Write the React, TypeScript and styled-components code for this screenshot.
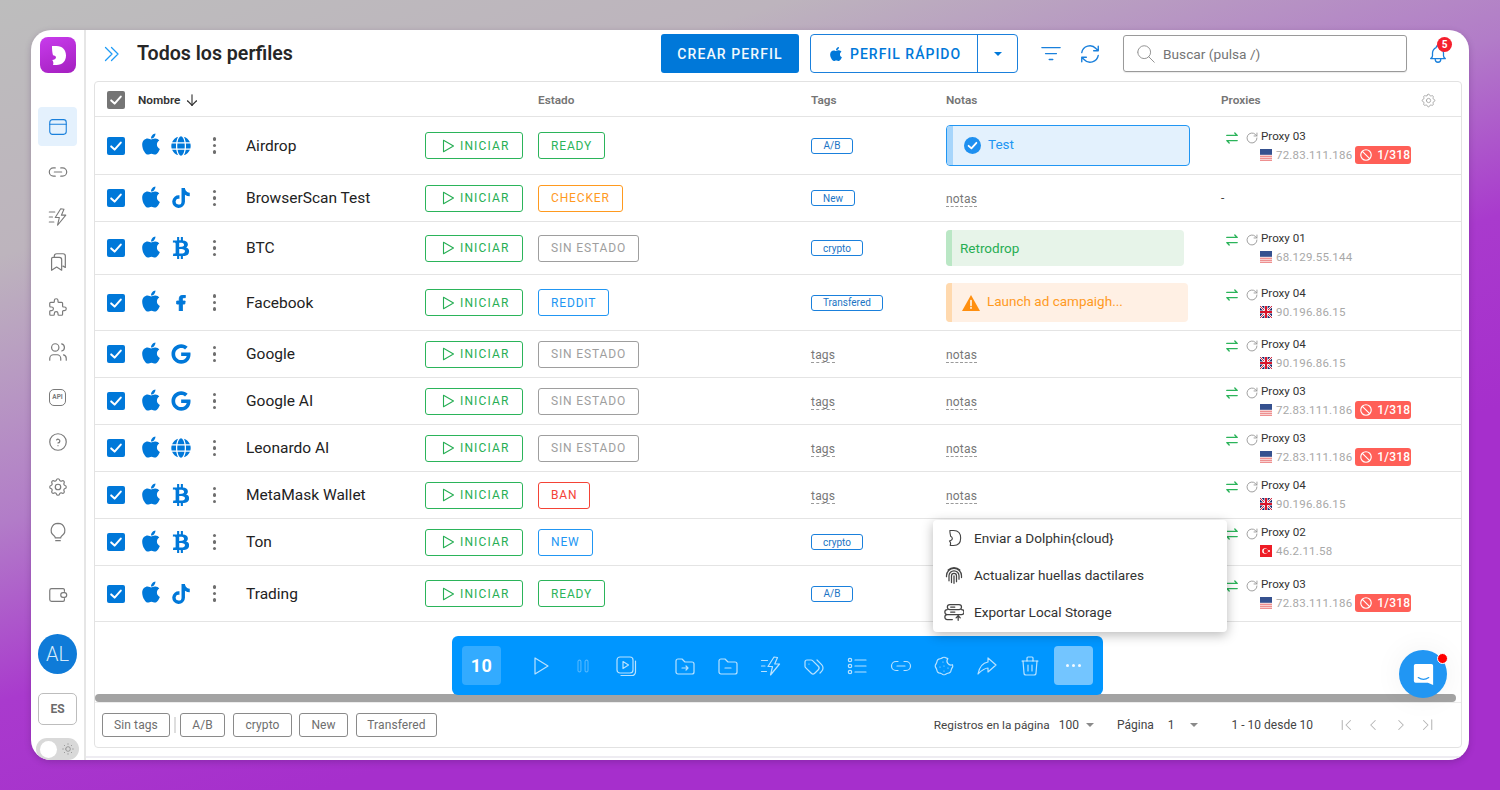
import React from 'react';
import styled, { createGlobalStyle } from 'styled-components';
import { FaApple, FaGlobe, FaTiktok, FaBtc, FaFacebookF, FaGoogle } from 'react-icons/fa';
import {
  TbPuzzle, TbUsers, TbHelpCircle, TbSettings, TbPlayerPlay,
  TbTags, TbCookie, TbShare3, TbTrash, TbBan, TbSearch, TbBell,
  TbArrowDown, TbChevronLeft, TbChevronRight,
  TbChevronLeftPipe, TbChevronRightPipe, TbSun,
} from 'react-icons/tb';

const Global = createGlobalStyle`
  html, body { margin: 0; padding: 0; height: 790px; overflow: hidden; }
  body { font-family: Roboto, "Liberation Sans", sans-serif; }
  * { box-sizing: border-box; }
`;

const Page = styled.div`
  width: 1500px; height: 790px; padding: 30px 31px;
  background: linear-gradient(162deg, #bdbdbd 0%, #bdb4bd 20%, #b27cc8 41%, #a93acd 55%, #a62fcc 70%, #a62fcc 100%);
`;
const Win = styled.div`
  position: relative; width: 1438px; height: 730px; display: flex; background: #fff;
  border-radius: 20px; overflow: hidden; box-shadow: 0 2px 6px rgba(60, 20, 80, .25);
`;
const Side = styled.aside`
  width: 55px; flex: none; border-right: 2px solid #e6e6e6; display: flex; flex-direction: column; align-items: center;
`;
const LogoBox = styled.div`
  width: 36px; height: 36px; margin-top: 7px; flex: none; border-radius: 8px;
  background: linear-gradient(160deg, #c83cec, #a41fbf);
  svg { display: block; }
`;
const Nav = styled.nav`margin-top: 31.5px; display: flex; flex-direction: column; align-items: center;`;
const NavSlot = styled.div<{ $active?: boolean; $mt?: number }>`
  width: 39px; height: 45px; flex: none; display: flex; align-items: center; justify-content: center;
  position: relative; margin-top: ${p => p.$mt ?? 0}px;
  color: ${p => (p.$active ? '#1a80dc' : '#7a7a7a')};
  ${p => p.$active && `
    &::before { content: ''; position: absolute; left: 0; top: 2.5px; width: 39px; height: 39px; background: #e4f1fd; border-radius: 4px; }
    svg { position: relative; }
  `}
`;
const ApiBox = styled.div`
  width: 17px; height: 17px; border: 1.3px solid #7a7a7a; border-radius: 5px; font-size: 6.5px; font-weight: 700;
  display: flex; align-items: center; justify-content: center; color: #7a7a7a; letter-spacing: 0;
`;
const Avatar = styled.div`
  width: 39px; height: 40px; margin-top: 16.5px; border-radius: 50%; background: #0f7bd8; color: #d6ebfb; flex: none;
  display: flex; align-items: center; justify-content: center; font-size: 20px; font-weight: 300;
`;
const Lang = styled.div`
  width: 39px; height: 32px; margin-top: 19px; border: 1px solid #bdbdbd; border-radius: 5px; color: #6b6b6b; flex: none;
  display: flex; align-items: center; justify-content: center; font-size: 12px; font-weight: 700;
`;
const Toggle = styled.div`
  width: 43px; height: 22px; margin-top: 13px; border-radius: 11px; background: #d9d9d9; flex: none; padding: 3px 4px;
  display: flex; align-items: center; justify-content: space-between; color: #8a8a8a;
`;
const Knob = styled.span`width: 17px; height: 17px; border-radius: 50%; background: #fff; display: block; flex: none;`;

const Main = styled.main`
  flex: 1; min-width: 0; padding: 0 7px 8px 8px; display: flex; flex-direction: column; height: 728px;
  border-bottom: 2px solid #eeecf2;
`;
const Head = styled.header`
  height: 51px; flex: none; padding: 0 15px 4px 10px; display: flex; align-items: center;
`;
const Chevrons = styled.svg`width: 16px; height: 16px; flex: none; display: block;`;
const Title = styled.h1`margin: 0 0 0 17px; font-size: 19.6px; font-weight: 600; color: #262626; white-space: nowrap;`;
const Create = styled.button`
  margin-left: auto; width: 138px; height: 39px; border: 0; border-radius: 3px; background: #0078d9; color: #f2f8fd;
  font: 500 14px Roboto, sans-serif; letter-spacing: 1.1px; padding: 0;
`;
const Split = styled.div`
  margin-left: 11px; width: 208px; height: 39px; border: 1px solid #1a80dc; border-radius: 4px; display: flex; color: #0078d9;
`;
const SplitMain = styled.div`
  width: 167px; border-right: 1px solid #1a80dc; display: flex; align-items: center; padding-left: 17px; gap: 6px;
  font-size: 14px; font-weight: 500; letter-spacing: 1px; white-space: nowrap;
`;
const SplitCaret = styled.div`flex: 1; display: flex; align-items: center; justify-content: center;`;
const CaretDown = styled.span<{ $c?: string; $w?: number }>`
  display: block; width: 0; height: 0; border-left: ${p => p.$w ?? 4.5}px solid transparent; border-right: ${p => p.$w ?? 4.5}px solid transparent;
  border-top: ${p => p.$w ?? 4.5}px solid ${p => p.$c ?? '#0078d9'};
`;
const ToolIcon = styled.div<{ $ml: number; $w: number }>`
  margin-left: ${p => p.$ml}px; width: ${p => p.$w}px; display: flex; justify-content: center; color: #1a80dc; flex: none;
`;
const SearchBox = styled.div`
  margin-left: 24px; width: 284px; height: 37px; border: 1px solid #9a9a9a; border-radius: 3px; display: flex; align-items: center; flex: none;
  padding-left: 11px; gap: 6px; color: #757575; font-size: 13.7px; box-shadow: 0 1px 1px rgba(0,0,0,.08);
`;
const BellWrap = styled.div`margin-left: 20px; width: 20px; height: 24px; position: relative; color: #1a80dc; flex: none; margin-top: 2px;`;
const Badge = styled.span`
  position: absolute; left: 10px; top: -5.5px; width: 15px; height: 15px; border-radius: 50%; background: #f5202e; color: #fff;
  font-size: 10px; font-weight: 700; display: flex; align-items: center; justify-content: center;
`;

const Card = styled.section`
  flex: 1; min-height: 0; border: 1px solid #e2e2e2; border-radius: 4px; display: flex; flex-direction: column;
`;
const HeadRow = styled.div`
  height: 35px; flex: none; display: grid; grid-template-columns: 43px 400px 273px 135px 275px 1fr; align-items: center; border-bottom: 1px solid #e4e4e4;
  padding-top: 2px; font-size: 11.8px; font-weight: 600; color: #757575;
`;
const HeadCheck = styled.div`padding-left: 12px; margin-right: -20px;`;
const HeadName = styled.div`display: flex; align-items: center; gap: 3px; color: #333; font-weight: 600;`;
const HeadLast = styled.div`display: flex; justify-content: space-between; align-items: center; padding-right: 24px; color: #757575;`;
const Row = styled.div<{ $h: number }>`
  height: ${p => p.$h}px; flex: none; display: grid; grid-template-columns: 47px 62px 42px 179px 113px 273px 135px 275px 1fr;
  align-items: center; border-bottom: 1px solid #e4e4e4;
`;
const CheckCell = styled.div`padding-left: 12px; display: flex;`;
const Cell = styled.div`display: flex; align-items: center; min-width: 0;`;
const Box = styled.span<{ $gray?: boolean }>`
  width: 18px; height: 18px; border-radius: 2px; background: ${p => (p.$gray ? '#757575' : '#0078d9')}; display: flex; align-items: center; justify-content: center; flex: none;
`;
const OsCell = styled.div`display: flex; align-items: center; color: #0078d9;`;
const OsSlot = styled.span`width: 29px; display: flex; margin-top: -3px; margin-left: -3px; margin-right: 3px;`;
const SiteSlot = styled.span`width: 20px; height: 22px; display: flex; justify-content: center; align-items: center;`;
const Dots = styled.div`
  display: flex; flex-direction: column; gap: 3px; padding-left: 8.5px;
  i { display: block; width: 3.5px; height: 3.5px; border-radius: 50%; background: #6e6e6e; }
`;
const Name = styled.div`font-size: 15.5px; color: #222; white-space: nowrap;`;
const Start = styled.button`
  width: 97.5px; height: 27px; border: 1px solid #2bb45a; border-radius: 3px; background: #fff; color: #27ae54; padding: 0 0 0 15px;
  display: flex; align-items: center; gap: 5px; font: 400 12px Roboto, sans-serif; letter-spacing: 1.15px;
`;
const Status = styled.span<{ $c: string }>`
  display: inline-flex; height: 27px; align-items: center; padding: 0 12px; border: 1px solid ${p => p.$c}; color: ${p => p.$c}; border-radius: 3px;
  font-size: 12px; letter-spacing: .85px; font-weight: 400; white-space: nowrap;
`;
const Tag = styled.span`
  display: inline-flex; height: 16px; padding: 0 11px; align-items: center; justify-content: center; min-width: 42px; border: 1px solid #1a80dc; border-radius: 3px;
  color: #1a74c4; font-size: 10px; white-space: nowrap;
`;
const Dashed = styled.span`
  font-size: 12px; color: #777; border-bottom: 1px dashed #9a9a9a; line-height: 13px; letter-spacing: .2px; margin-top: 3px;
`;
const Note = styled.div<{ $bg: string; $bar: string; $c: string; $w: number; $h: number; $border?: boolean; $pl: number }>`
  width: ${p => p.$w}px; height: ${p => p.$h}px; background: ${p => p.$bg}; border-radius: 4px; color: ${p => p.$c}; font-size: 13.5px;
  display: flex; align-items: center; gap: 7px; padding-left: ${p => p.$pl}px; position: relative; overflow: hidden;
  ${p => p.$border && `border: 1px solid #2196f3;`}
  &::before { content: ''; position: absolute; left: 0; top: 0; bottom: 0; width: 6px; background: ${p => p.$bar}; }
`;
const NoteText = styled.span`margin-top: -4px;`;
const Px = styled.div`display: flex; padding: 1px 0 0 5px; align-items: flex-start;`;
const PxIcons = styled.div`display: flex; align-items: center; gap: 7px; width: 35px; flex: none; height: 15px; margin-top: 1.5px; color: #9a9a9a;`;
const PxLines = styled.div`display: flex; flex-direction: column; gap: 2px;`;
const PxName = styled.div`font-size: 11.6px; line-height: 15px; height: 15px; color: #333;`;
const PxAddr = styled.div`display: flex; align-items: center; height: 18px; font-size: 11.5px; color: #a8a8a8; letter-spacing: .2px; gap: 4px; white-space: nowrap; margin-left: -1px;`;
const PxNone = styled.div`font-size: 12px; color: #444;`;
const FlagSvg = styled.svg`width: 12px; height: 12px; flex: none; display: block;`;
const Blocked = styled.span`
  display: inline-flex; align-items: center; gap: 4px; height: 18px; width: 56px; padding-left: 4px; margin-left: -1px; border-radius: 3px; background: #ff5f57; color: #fff;
  font-size: 12px; font-weight: 500; letter-spacing: .2px;
`;
const Spacer = styled.div`height: 72px; flex: none;`;
const Scroll = styled.div`height: 8px; flex: none; width: 1361px; border-radius: 4px; background: #a3a3a3;`;
const Foot = styled.footer`
  flex: 1; min-height: 0; border-top: 1px solid #ececec; display: flex; align-items: center; padding: 0 24px 0 7px;
`;
const FilterTag = styled.span<{ $w: number; $ml: number }>`
  width: ${p => p.$w}px; margin-left: ${p => p.$ml}px; height: 24px; display: flex; align-items: center; justify-content: center; flex: none;
  border: 1px solid #8a8a8a; border-radius: 3px; color: #6e6e6e; font-size: 12px; letter-spacing: .1px;
`;
const Sep = styled.span`width: 2px; height: 16px; margin-left: 4px; background: #dedede; flex: none;`;
const Pager = styled.div`
  margin-left: auto; display: flex; align-items: center; font-size: 12px; color: #444; white-space: nowrap;
`;
const PagerText = styled.span<{ $ml?: number; $fs?: number }>`
  margin-left: ${p => p.$ml ?? 0}px; ${p => p.$fs && `font-size: ${p.$fs}px;`}
`;
const PagerCaret = styled.span<{ $ml: number }>`margin-left: ${p => p.$ml}px; display: block;`;
const PagerIcons = styled.div`margin-left: 23.5px; display: flex; gap: 9.5px; color: #b5b5b5;`;

const Bar = styled.div`
  position: absolute; left: 421px; top: 606px; width: 651px; height: 59px; border-radius: 6px; background: #0096ff; padding: 10px; display: flex; align-items: center;
  color: rgba(255,255,255,.72);
`;
const Count = styled.div`
  width: 39px; height: 39px; background: rgba(255,255,255,.2); border-radius: 4px; color: #fff; font-size: 18px; font-weight: 700; letter-spacing: .5px;
  display: flex; align-items: center; justify-content: center; flex: none;
`;
const BarSlot = styled.div<{ $ml?: number; $dim?: boolean }>`
  width: 43.2px; margin-left: ${p => p.$ml ?? 0}px; display: flex; justify-content: center; flex: none; opacity: ${p => (p.$dim ? .45 : 1)};
`;
const More = styled.div`
  margin-left: auto; width: 39px; height: 39px; background: rgba(255,255,255,.45); border-radius: 4px; display: flex; align-items: center; justify-content: center; gap: 2.5px;
  i { display: block; width: 3.5px; height: 3.5px; background: rgba(255,255,255,.9); border-radius: 50%; }
`;
const Menu = styled.div`
  position: absolute; left: 902px; top: 490px; width: 294px; height: 112px; border-radius: 4px; background: #fff; padding-bottom: 2px;
  display: flex; flex-direction: column; justify-content: center;
  box-shadow: 0 3px 12px rgba(0,0,0,.28);
`;
const MenuItem = styled.div`
  height: 37px; flex: none; display: flex; align-items: center; padding-left: 11px; gap: 10px; font-size: 13.6px; color: #333; white-space: nowrap;
  svg { color: #444; }
`;
const Chat = styled.div`
  position: absolute; left: 1368px; top: 620px; width: 48px; height: 48px; border-radius: 50%; background: #2196f3;
  box-shadow: 0 0 30px rgba(0,0,0,.06); display: flex; align-items: center; justify-content: center;
`;
const ChatDot = styled.span`
  position: absolute; right: -1px; top: 3px; width: 11px; height: 11px; border-radius: 50%; background: #f00; border: 1.5px solid #fff;
`;

const Glyph = styled.svg.attrs({ viewBox: '0 0 24 24', fill: 'none', stroke: 'currentColor', strokeLinecap: 'round', strokeLinejoin: 'round' })<{ $s: number; $t?: number }>`
  width: ${p => p.$s}px; height: ${p => p.$s}px; stroke-width: ${p => p.$t ?? 1.3}; flex: none; display: block;
`;

const tick = (
  <svg width="14" height="14" viewBox="0 0 14 14" fill="none" stroke="#fff" strokeWidth="2" strokeLinecap="round" strokeLinejoin="round">
    <path d="M2.2 7.4 5.6 10.6 11.8 3.6" />
  </svg>
);

const US = () => (
  <FlagSvg viewBox="0 0 12 12">
    <rect width="12" height="12" fill="#fbe3e3" />
    {[6.8, 8.8, 10.8].map(y => <rect key={y} y={y} width="12" height="1.2" fill="#ee9090" />)}
    <rect width="12" height="5.8" fill="#35518f" />
  </FlagSvg>
);
const GB = () => (
  <FlagSvg viewBox="0 0 12 12">
    <rect width="12" height="12" fill="#1a2a6c" />
    <path d="M0 0 12 12M12 0 0 12" stroke="#fff" strokeWidth="2.2" />
    <path d="M0 0 12 12M12 0 0 12" stroke="#d8142b" strokeWidth=".9" />
    <path d="M6 0v12M0 6h12" stroke="#fff" strokeWidth="3.2" />
    <path d="M6 0v12M0 6h12" stroke="#d8142b" strokeWidth="2" />
  </FlagSvg>
);
const TR = () => (
  <FlagSvg viewBox="0 0 12 12">
    <rect width="12" height="12" fill="#ee1c25" />
    <circle cx="5" cy="6" r="2.8" fill="#fff" />
    <circle cx="5.8" cy="6" r="2.2" fill="#ee1c25" />
    <circle cx="9" cy="6" r="1" fill="#fff" />
  </FlagSvg>
);
const Swap = () => (
  <svg width="12" height="12" viewBox="0 0 12 12" fill="none" stroke="#2bb45a" strokeWidth="1.4" strokeLinecap="round" strokeLinejoin="round" style={{ flex: 'none' }}>
    <path d="M.8 3.4h10.4L8.8 1M11.2 8.6H.8l2.400 2.400" />
  </svg>
);
const Reload = () => (
  <Glyph $s={14} $t={1.6}><path d="M20.5 12a8.500 8.500 0 1 1-2.700-6.200L20.5 8.500M20.5 3.500v5h-5" /></Glyph>
);

type Site = 'globe' | 'tiktok' | 'btc' | 'fb' | 'google';
const siteIcon = (s: Site) => {
  if (s === 'globe') return <FaGlobe size={20} />;
  if (s === 'tiktok') return <FaTiktok size={20} />;
  if (s === 'btc') return <FaBtc size={22} />;
  if (s === 'fb') return <FaFacebookF size={16} stroke="currentColor" strokeWidth={30} />;
  return <FaGoogle size={20} />;
};
const C = { green: '#2bb45a', orange: '#ff9a1f', gray: '#9e9e9e', blue: '#2196f3', red: '#f44336' };

type NoteKind = 'test' | 'retro' | 'launch' | undefined;
type RowData = {
  h: number; name: string; site: Site; st: string; sc: string; tag?: string; note?: NoteKind; noNote?: boolean;
  px?: string; ip?: string; flag?: 'us' | 'gb' | 'tr'; blocked?: boolean;
};
const rows: RowData[] = [
  { h: 58, name: 'Airdrop', site: 'globe', st: 'READY', sc: C.green, tag: 'A/B', note: 'test', px: 'Proxy 03', ip: '72.83.111.186', flag: 'us', blocked: true },
  { h: 47, name: 'BrowserScan Test', site: 'tiktok', st: 'CHECKER', sc: C.orange, tag: 'New' },
  { h: 53, name: 'BTC', site: 'btc', st: 'SIN ESTADO', sc: C.gray, tag: 'crypto', note: 'retro', px: 'Proxy 01', ip: '68.129.55.144', flag: 'us' },
  { h: 56, name: 'Facebook', site: 'fb', st: 'REDDIT', sc: C.blue, tag: 'Transfered', note: 'launch', px: 'Proxy 04', ip: '90.196.86.15', flag: 'gb' },
  { h: 47, name: 'Google', site: 'google', st: 'SIN ESTADO', sc: C.gray, px: 'Proxy 04', ip: '90.196.86.15', flag: 'gb' },
  { h: 47, name: 'Google AI', site: 'google', st: 'SIN ESTADO', sc: C.gray, px: 'Proxy 03', ip: '72.83.111.186', flag: 'us', blocked: true },
  { h: 47, name: 'Leonardo AI', site: 'globe', st: 'SIN ESTADO', sc: C.gray, px: 'Proxy 03', ip: '72.83.111.186', flag: 'us', blocked: true },
  { h: 47, name: 'MetaMask Wallet', site: 'btc', st: 'BAN', sc: C.red, px: 'Proxy 04', ip: '90.196.86.15', flag: 'gb' },
  { h: 47, name: 'Ton', site: 'btc', st: 'NEW', sc: C.blue, tag: 'crypto', noNote: true, px: 'Proxy 02', ip: '46.2.11.58', flag: 'tr' },
  { h: 56, name: 'Trading', site: 'tiktok', st: 'READY', sc: C.green, tag: 'A/B', noNote: true, px: 'Proxy 03', ip: '72.83.111.186', flag: 'us', blocked: true },
];

const noteView = (r: RowData) => {
  if (r.note === 'test') return (
    <Note $bg="#e3f1fd" $bar="#a6d5fb" $c="#2196f3" $w={244} $h={41} $border $pl={17}>
      <svg width="17" height="17" viewBox="0 0 17 17"><circle cx="8.5" cy="8.5" r="8.5" fill="#1e90f0" /><path d="M4.6 8.8 7.4 11.4 12.4 5.8" fill="none" stroke="#fff" strokeWidth="1.8" strokeLinecap="round" strokeLinejoin="round" /></svg>
      <NoteText>Test</NoteText>
    </Note>
  );
  if (r.note === 'retro') return <Note $bg="#e7f4e9" $bar="#bae7c5" $c="#27ae54" $w={238} $h={36} $pl={14}>Retrodrop</Note>;
  if (r.note === 'launch') return (
    <Note $bg="#fff0e4" $bar="#ffd9ae" $c="#ff9a1f" $w={242} $h={39} $pl={16}>
      <svg width="18" height="16" viewBox="0 0 18 16"><path d="M9 0 18 16H0z" fill="#ff8f0f" /><path d="M9 5.5v5M9 12.6v.6" stroke="#fff" strokeWidth="1.5" strokeLinecap="round" /></svg>
      <NoteText>Launch ad campaigh...</NoteText>
    </Note>
  );
  if (r.noNote) return null;
  return <Dashed>notas</Dashed>;
};

const boltPath = 'M15 3 9 12.5h4.500L11.500 21l9-11h-4.800L18.500 3.500 15 3zM2.500 6.500h6M2.500 12h3.500M2.500 17.500h5';
const linkPath = 'M9 7.500H7a4.500 4.500 0 0 0 0 9h2M15 7.500h2a4.500 4.500 0 0 1 0 9h-2M8 12h8';

export default function App() {
  return (
    <Page>
      <Global />
      <Win>
        <Side>
          <LogoBox>
            <svg width="36" height="36" viewBox="0 0 36 36">
              <path d="M12 9h4.500c6 0 9.500 4 9.500 9.500S22.500 28 16.500 28H13c.8-1.800.3-3.600-.8-5 2-.2 3.600-.8 3.800-2.500.1-1.300-1.500-2-3-2.200-.8-3-1-6-1-9.300z" fill="#fff" />
            </svg>
          </LogoBox>
          <Nav>
            <NavSlot $active><Glyph $s={22} $t={1.2}><rect x="3" y="4" width="18" height="16" rx="3" /><path d="M3 9h18" /></Glyph></NavSlot>
            <NavSlot><Glyph $s={22}><path d={linkPath} /></Glyph></NavSlot>
            <NavSlot><Glyph $s={22} $t={1.2}><path d={boltPath} /></Glyph></NavSlot>
            <NavSlot><Glyph $s={22}><path d="M8 7V5.500A2.500 2.500 0 0 1 10.500 3h7A2.500 2.500 0 0 1 20 5.500V18l-2.500-1.500M6.500 7h7A2.500 2.500 0 0 1 16 9.500V21l-5.500-3.500L5 21V8.500A1.500 1.500 0 0 1 6.500 7z" /></Glyph></NavSlot>
            <NavSlot><TbPuzzle size={22} strokeWidth={1.3} /></NavSlot>
            <NavSlot><TbUsers size={22} strokeWidth={1.3} /></NavSlot>
            <NavSlot><ApiBox>API</ApiBox></NavSlot>
            <NavSlot><TbHelpCircle size={22} strokeWidth={1.3} /></NavSlot>
            <NavSlot><TbSettings size={22} strokeWidth={1.3} /></NavSlot>
            <NavSlot><Glyph $s={22}><path d="M12 2.500a7.500 7.500 0 0 0-4.300 13.600c.7.500 1.300 1.300 1.300 2.200v.2h6v-.2c0-.9.6-1.700 1.300-2.200A7.500 7.500 0 0 0 12 2.500zM9.500 21.500h5" /></Glyph></NavSlot>
          </Nav>
          <NavSlot $mt={18}><Glyph $s={22}><path d="M19 8V6.500A1.500 1.500 0 0 0 17.500 5H5a2 2 0 0 0-2 2v10a2 2 0 0 0 2 2h12.500a1.500 1.500 0 0 0 1.500-1.500V16" /><rect x="15" y="9.500" width="6.500" height="5" rx="2.500" /></Glyph></NavSlot>
          <Avatar>AL</Avatar>
          <Lang>ES</Lang>
          <Toggle><Knob /><TbSun size={14} strokeWidth={1.4} /></Toggle>
        </Side>
        <Main>
          <Head>
            <Chevrons viewBox="0 0 16 16" fill="none" stroke="#1e9bf5" strokeWidth="1.3" strokeLinecap="round" strokeLinejoin="round">
              <path d="M1.500 1.500 8 8l-6.500 6.500M7.500 1.500 14 8l-6.500 6.500" />
            </Chevrons>
            <Title>Todos los perfiles</Title>
            <Create>CREAR PERFIL</Create>
            <Split>
              <SplitMain><FaApple size={16} />PERFIL RÁPIDO</SplitMain>
              <SplitCaret><CaretDown /></SplitCaret>
            </Split>
            <ToolIcon $ml={23} $w={20}><Glyph $s={22} $t={1.4}><path d="M2 5h20M6 11.500h12M10 18h4" /></Glyph></ToolIcon>
            <ToolIcon $ml={20} $w={18}><Glyph $s={22} $t={1.5}><path d="M3 10.500a9 9 0 0 1 15.500-4.500L21 8.500M21 3.500v5h-5M21 13.500a9 9 0 0 1-15.500 4.500L3 15.500M3 20.500v-5h5" /></Glyph></ToolIcon>
            <SearchBox><TbSearch size={22} strokeWidth={1} color="#8a8a8a" />Buscar (pulsa /)</SearchBox>
            <BellWrap><TbBell size={22} strokeWidth={1.4} /><Badge>5</Badge></BellWrap>
          </Head>
          <Card>
            <HeadRow>
              <HeadCheck><Box $gray>{tick}</Box></HeadCheck>
              <HeadName>Nombre <TbArrowDown size={18} strokeWidth={1.5} /></HeadName>
              <div>Estado</div>
              <div>Tags</div>
              <div>Notas</div>
              <HeadLast>Proxies <TbSettings size={17} strokeWidth={1.1} color="#9a9a9a" /></HeadLast>
            </HeadRow>
            {rows.map(r => (
              <Row key={r.name} $h={r.h}>
                <CheckCell><Box>{tick}</Box></CheckCell>
                <OsCell>
                  <OsSlot><FaApple size={24} /></OsSlot>
                  <SiteSlot>{siteIcon(r.site)}</SiteSlot>
                </OsCell>
                <Dots><i /><i /><i /></Dots>
                <Name>{r.name}</Name>
                <Cell>
                  <Start>
                    <svg width="14" height="14" viewBox="0 0 14 14" fill="none" stroke="currentColor" strokeWidth="1.1" strokeLinejoin="round"><path d="M2.500 1.300 12.500 7l-10 5.700z" /></svg>
                    INICIAR
                  </Start>
                </Cell>
                <Cell><Status $c={r.sc}>{r.st}</Status></Cell>
                <Cell>{r.tag ? <Tag>{r.tag}</Tag> : <Dashed>tags</Dashed>}</Cell>
                <Cell>{noteView(r)}</Cell>
                {r.px ? (
                  <Px>
                    <PxIcons><Swap /><Reload /></PxIcons>
                    <PxLines>
                      <PxName>{r.px}</PxName>
                      <PxAddr>
                        {r.flag === 'us' ? <US /> : r.flag === 'gb' ? <GB /> : <TR />}
                        {r.ip}
                        {r.blocked && <Blocked><TbBan size={14} strokeWidth={2} />1/318</Blocked>}
                      </PxAddr>
                    </PxLines>
                  </Px>
                ) : <PxNone>-</PxNone>}
              </Row>
            ))}
            <Spacer />
            <Scroll />
            <Foot>
              <FilterTag $w={68} $ml={0}>Sin tags</FilterTag>
              <Sep />
              <FilterTag $w={45} $ml={4}>A/B</FilterTag>
              <FilterTag $w={59} $ml={8}>crypto</FilterTag>
              <FilterTag $w={49} $ml={7}>New</FilterTag>
              <FilterTag $w={81} $ml={8}>Transfered</FilterTag>
              <Pager>
                <PagerText $fs={11.8}>Registros en la página</PagerText>
                <PagerText $ml={9}>100</PagerText>
                <PagerCaret $ml={7}><CaretDown $c="#8a8a8a" $w={4} /></PagerCaret>
                <PagerText $ml={23}>Página</PagerText>
                <PagerText $ml={14}>1</PagerText>
                <PagerCaret $ml={15}><CaretDown $c="#8a8a8a" $w={4} /></PagerCaret>
                <PagerText $ml={34}>1 - 10 desde 10</PagerText>
                <PagerIcons>
                  <TbChevronLeftPipe size={18} strokeWidth={1.4} />
                  <TbChevronLeft size={18} strokeWidth={1.4} />
                  <TbChevronRight size={18} strokeWidth={1.4} />
                  <TbChevronRightPipe size={18} strokeWidth={1.4} />
                </PagerIcons>
              </Pager>
            </Foot>
          </Card>
        </Main>
        <Bar>
          <Count>10</Count>
          <BarSlot $ml={17.5}><TbPlayerPlay size={24} strokeWidth={1.2} /></BarSlot>
          <BarSlot $dim><Glyph $s={20}><rect x="6" y="5" width="3.500" height="14" rx="1.700" /><rect x="14.500" y="5" width="3.500" height="14" rx="1.700" /></Glyph></BarSlot>
          <BarSlot><Glyph $s={24} $t={1.2}><rect x="3" y="3" width="16" height="16" rx="3" /><path d="M9 7.500 14.500 11 9 14.500zM21.500 7v11a3.500 3.500 0 0 1-3.500 3.500H7" /></Glyph></BarSlot>
          <BarSlot $ml={15}><Glyph $s={24} $t={1.2}><path d="M3 7a2 2 0 0 1 2-2h4l3 3h7a2 2 0 0 1 2 2v8a2 2 0 0 1-2 2H5a2 2 0 0 1-2-2zM9 14h6M13 12l2 2-2 2" /></Glyph></BarSlot>
          <BarSlot><Glyph $s={24} $t={1.2}><path d="M3 7a2 2 0 0 1 2-2h4l3 3h7a2 2 0 0 1 2 2v8a2 2 0 0 1-2 2H5a2 2 0 0 1-2-2zM9 14h6" /></Glyph></BarSlot>
          <BarSlot><Glyph $s={24} $t={1.2}><path d={boltPath} /></Glyph></BarSlot>
          <BarSlot><TbTags size={24} strokeWidth={1.2} /></BarSlot>
          <BarSlot><Glyph $s={24} $t={1.2}><path d="M10 6h11M10 12h11M10 18h11" /><circle cx="5" cy="6" r="1.700" /><circle cx="5" cy="12" r="1.700" /><circle cx="5" cy="18" r="1.700" /></Glyph></BarSlot>
          <BarSlot><Glyph $s={24} $t={1.2}><path d={linkPath} /></Glyph></BarSlot>
          <BarSlot><TbCookie size={24} strokeWidth={1.2} /></BarSlot>
          <BarSlot><TbShare3 size={24} strokeWidth={1.2} /></BarSlot>
          <BarSlot><TbTrash size={24} strokeWidth={1.2} /></BarSlot>
          <More><i /><i /><i /></More>
        </Bar>
        <Menu>
          <MenuItem>
            <Glyph $s={20} $t={1.3}><path d="M7 3h4.500c6 0 8.500 4 8.500 9s-2.500 9-8.500 9H7.500c1-2.500.5-4-1-5.500 2-.5 3.500-1.500 3.500-3 0-1-1-2-2-2.500C7.500 8 7 5.500 7 3z" /></Glyph>
            Enviar a Dolphin{'{cloud}'}
          </MenuItem>
          <MenuItem>
            <Glyph $s={20} $t={1.5}><path d="M5 6a10 10 0 0 1 14 0M3 14v-1a9 9 0 0 1 18 0v2M6 19v-6a6 6 0 0 1 12 0v4M9 21v-8a3 3 0 0 1 6 0v7M12 22v-9" /></Glyph>
            Actualizar huellas dactilares
          </MenuItem>
          <MenuItem>
            <Glyph $s={20} $t={1.5}><rect x="4" y="3" width="17" height="6" rx="3" /><path d="M4 15a3 3 0 0 1 0-6M21 9a3 3 0 0 1 0 6H4M4 15a3 3 0 0 0 0 6h6M17 22v-5M14.500 19l2.500-2.500 2.500 2.500M8 6h5M8 12h5" /></Glyph>
            Exportar Local Storage
          </MenuItem>
        </Menu>
        <Chat>
          <svg width="21" height="23" viewBox="0 0 24 26">
            <path d="M3 1h18a2 2 0 0 1 2 2v22l-6-2.500H3a2 2 0 0 1-2-2V3a2 2 0 0 1 2-2z" fill="#fff" />
            <path d="M6 16.500c3.500 2.500 8.500 2.500 12 0" fill="none" stroke="#2196f3" strokeWidth="1.4" strokeLinecap="round" />
          </svg>
          <ChatDot />
        </Chat>
      </Win>
    </Page>
  );
}
